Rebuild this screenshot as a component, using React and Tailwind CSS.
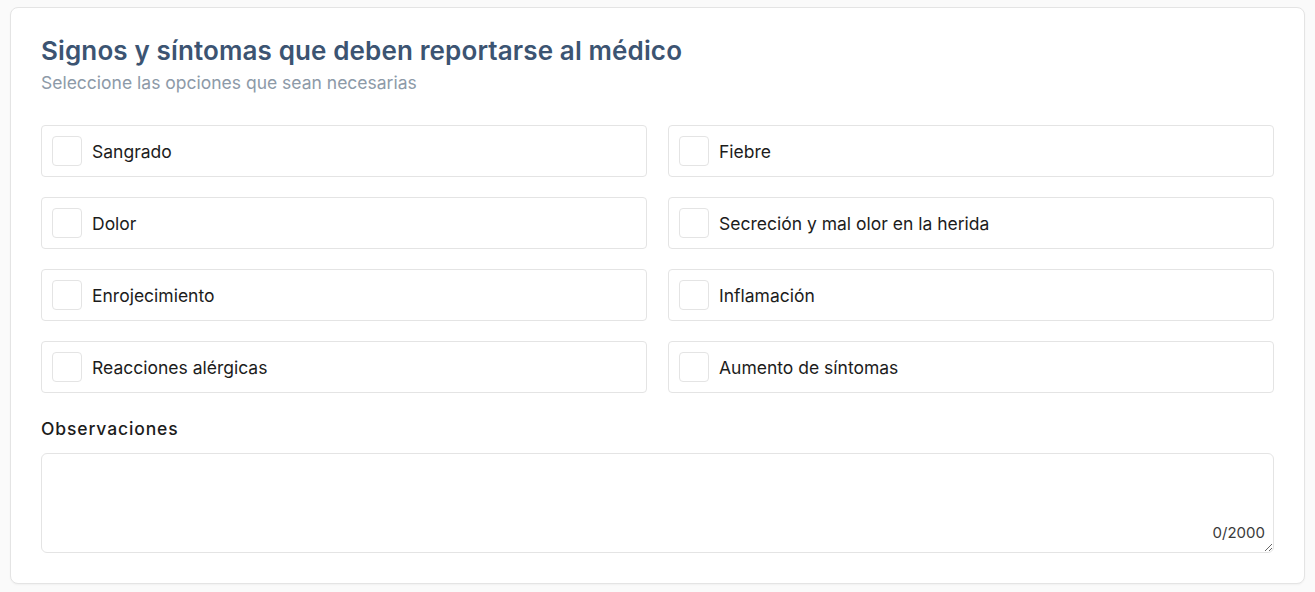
import React, { useState } from "react";

const options = [
  "Sangrado",
  "Fiebre",
  "Dolor",
  "Secreción y mal olor en la herida",
  "Enrojecimiento",
  "Inflamación",
  "Reacciones alérgicas",
  "Aumento de síntomas",
];

const App = () => {
  const [checked, setChecked] = useState([]);
  const [notes, setNotes] = useState("");

  const toggle = (name) => {
    setChecked((prev) =>
      prev.includes(name) ? prev.filter((n) => n !== name) : [...prev, name]
    );
  };

  return (
    <div className="min-h-[592px] bg-[#fafafa] pt-[7px] px-[10px] pb-[8px] font-['Inter',sans-serif]">
      <section className="rounded-lg border border-[#e4e4e4] bg-white px-[30px] pt-[27px] pb-[30px] shadow-[0_1px_2px_rgba(0,0,0,0.04)]">
        <h2 className="text-[26px] leading-[32px] font-semibold tracking-[0.005em] text-[#3c5472]">
          Signos y síntomas que deben reportarse al médico
        </h2>
        <p className="mt-[4px] text-[17.5px] leading-[24px] text-[#8d9aa8]">
          Seleccione las opciones que sean necesarias
        </p>

        <div className="mt-[30px] grid grid-cols-2 gap-x-[21px] gap-y-[20px]">
          {options.map((name) => (
            <label
              key={name}
              className="flex h-[52px] cursor-pointer items-center gap-[10px] rounded-[4px] border border-[#e4e4e4] px-[10px]"
            >
              <input
                type="checkbox"
                checked={checked.includes(name)}
                onChange={() => toggle(name)}
                className="sr-only"
              />
              <span className="flex h-[30px] w-[30px] items-center justify-center rounded-[4px] border border-[#e4e4e4] bg-white">
                {checked.includes(name) && (
                  <svg viewBox="0 0 24 24" className="h-4 w-4" fill="none" stroke="#3c5472" strokeWidth="3">
                    <path d="M5 12l5 5L20 7" />
                  </svg>
                )}
              </span>
              <span className="pt-[2px] text-[17.5px] leading-[24px] text-[#1c1c1c]">{name}</span>
            </label>
          ))}
        </div>

        <p className="mt-[24px] text-[17.5px] leading-[24px] font-medium tracking-[0.05em] text-[#1c1c1c]">
          Observaciones
        </p>
        <div className="relative mt-[12px]">
          <textarea
            value={notes}
            maxLength={2000}
            onChange={(e) => setNotes(e.target.value)}
            className="block h-[100px] w-full rounded-[6px] border border-[#e4e4e4] bg-white px-3 py-2 text-[16px] outline-none"
          />
          <span className="pointer-events-none absolute right-[9px] bottom-[10px] text-[15px] leading-[20px] text-[#3a3a3a]">
            {notes.length}/2000
          </span>
        </div>
      </section>
    </div>
  );
};

export default App;
